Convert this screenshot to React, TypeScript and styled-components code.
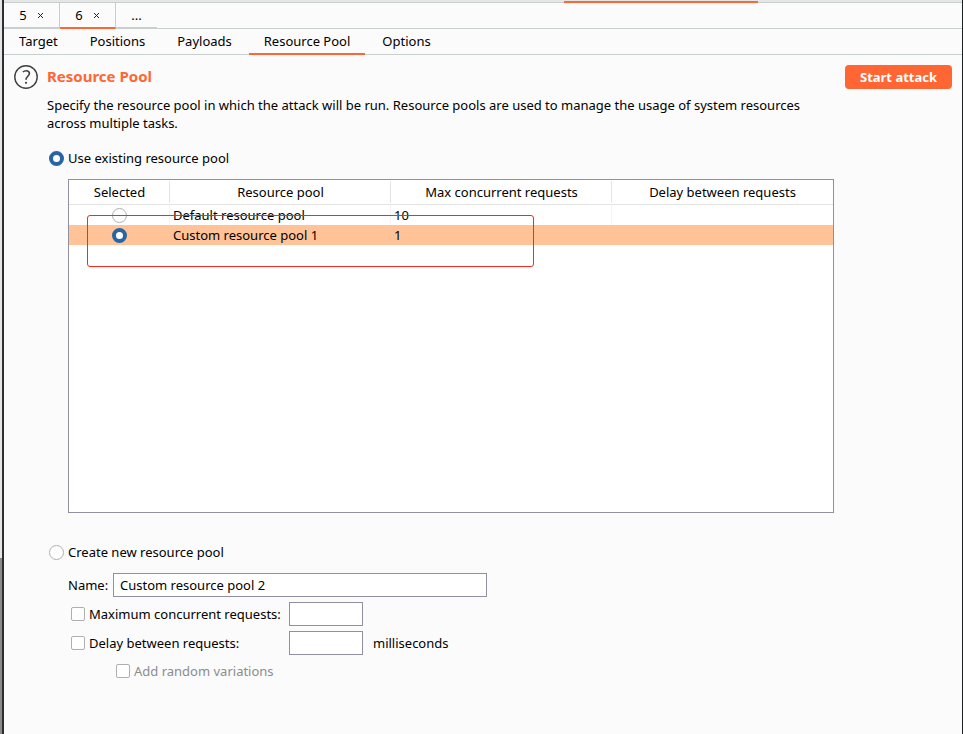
import React, { useState } from "react";
import styled, { createGlobalStyle } from "styled-components";

const accent = "#ff6633";
const line = "#c8d0cf";
const fieldBorder = "#9290a0";

const GlobalStyle = createGlobalStyle`
  *, *::before, *::after { box-sizing: border-box; }
  body {
    margin: 0;
    background: #fbfbfb;
    color: #000;
    font-family: "Noto Sans", "Open Sans", sans-serif;
    font-size: 13px;
    line-height: 18px;
  }
  button, input { font: inherit; color: inherit; }
`;

const Screen = styled.div`
  display: flex;
  min-height: 100vh;
`;

const DesktopEdge = styled.div`
  width: 2px;
  background: linear-gradient(#e6e6e6 0 76%, #8a8a88 76% 100%);
`;

const Window = styled.main`
  flex: 1;
  min-width: 0;
  border-left: 2px solid #2b2f31;
  border-right: 1px solid #1c2024;
`;

const TopStrip = styled.div`
  display: flex;
  height: 3px;
  padding-left: 560px;
  background: #e6e6e6;
  border-bottom: 1px solid ${line};
`;

const TopMarker = styled.div`
  width: 194px;
  height: 2px;
  margin-top: 1px;
  background: ${accent};
`;

const AttackTabs = styled.nav`
  display: flex;
  height: 26px;
  border-bottom: 1px solid ${line};
`;

const AttackTab = styled.div<{ $active?: boolean }>`
  display: flex;
  align-items: center;
  justify-content: center;
  gap: 10px;
  width: 56px;
  height: 26px;
  border-right: 1px solid ${line};
  border-bottom: 2px solid ${(p) => (p.$active ? accent : line)};
`;

const PlainButton = styled.button`
  display: flex;
  align-items: center;
  padding: 0;
  border: 0;
  background: none;
`;

const MoreTab = styled(PlainButton)`
  justify-content: center;
  width: 41px;
  height: 25px;
  border-bottom: 1px solid ${line};
`;

const SectionTabs = styled.nav`
  display: flex;
  gap: 2px;
  height: 26px;
  border-bottom: 1px solid ${line};
`;

const SectionTab = styled.button<{ $active?: boolean }>`
  height: 26px;
  padding: 0 15px;
  border: 0;
  border-bottom: 2px solid ${(p) => (p.$active ? accent : "transparent")};
  background: none;
  white-space: nowrap;
`;

const Content = styled.div`
  display: flex;
  align-items: flex-start;
  gap: 11px;
  padding: 10px;
`;

const Main = styled.section`
  flex: 1;
  min-width: 0;
`;

const TitleRow = styled.header`
  display: flex;
  align-items: center;
  gap: 9px;
  height: 24px;
`;

const HelpButton = styled(PlainButton)`
  width: 24px;
  height: 24px;
`;

const Title = styled.h1`
  margin: 0;
  padding-bottom: 2px;
  color: ${accent};
  font-size: 15px;
  line-height: 20px;
`;

const Body = styled.div`
  padding-left: 33px;
`;

const Description = styled.p`
  margin: 7px 0 17px;
`;

const StartButton = styled.button`
  width: 107px;
  height: 24px;
  padding: 0;
  border: 0;
  border-radius: 4px;
  background: ${accent};
  color: #fff;
  font-weight: 700;
`;

const Option = styled.label<{ $disabled?: boolean }>`
  display: flex;
  align-items: center;
  gap: 4px;
  height: 18px;
  color: ${(p) => (p.$disabled ? "#8c8c8c" : "inherit")};
  white-space: nowrap;
`;

const PoolOption = styled(Option)`
  margin-left: 2px;
`;

const Radio = styled.input.attrs({ type: "radio" })`
  appearance: none;
  flex: none;
  width: 15px;
  height: 15px;
  margin: 0;
  border: 1px solid #b0b0b0;
  border-radius: 50%;
  background: #fff;
  &:checked { border: 4px solid #2765a3; }
`;

const Checkbox = styled.input.attrs({ type: "checkbox" })`
  appearance: none;
  flex: none;
  width: 14px;
  height: 14px;
  margin: 0;
  border: 1px solid #afafaf;
  border-radius: 2px;
  background: #fff;
  &:checked { background: #2765a3; }
`;

const TablePanel = styled.div`
  position: relative;
  min-height: 334px;
  margin: 12px 0 30px 21px;
  border: 1px solid ${fieldBorder};
  background: #fff;
`;

const PoolTable = styled.table`
  width: 100%;
  border-spacing: 0;
  table-layout: fixed;
`;

const HeadCell = styled.th`
  height: 25px;
  padding: 0;
  border-bottom: 1px solid #e4e4e4;
  background: linear-gradient(#e4e4e4, #e4e4e4) right 1px / 1px 22px no-repeat;
  font-weight: 400;
  &:first-child { width: 101px; }
  &:last-child { background: none; }
`;

const PoolRow = styled.tr<{ $selected: boolean }>`
  background: ${(p) => (p.$selected ? "#ffc397" : "#fff")};
`;

const PoolCell = styled.td<{ $selected: boolean }>`
  height: 20px;
  padding: 0 3px;
  border-right: 1px solid ${(p) => (p.$selected ? "transparent" : "#f4f4f4")};
  &:last-child { border-right: 0; }
  ${Radio} { display: block; margin: 0 auto; }
`;

const Highlight = styled.div`
  position: absolute;
  top: 35px;
  left: 18px;
  width: 447px;
  height: 52px;
  border: 1px solid #f92a1c;
  border-radius: 3px;
  pointer-events: none;
`;

const Form = styled.div`
  display: flex;
  flex-direction: column;
  gap: 5px;
  margin: 12px 0 0 21px;
`;

const FormRow = styled.div`
  display: flex;
  align-items: center;
  height: 24px;
`;

const NameLabel = styled.label`
  width: 45px;
`;

const CheckSlot = styled.div`
  width: 221px;
  padding-left: 3px;
`;

const TextField = styled.input<{ $wide?: boolean }>`
  width: ${(p) => (p.$wide ? 374 : 74)}px;
  height: 24px;
  padding: 0 6px;
  border: 1px solid ${fieldBorder};
  border-radius: 0;
  background: #fff;
`;

const Unit = styled.span`
  margin-left: 10px;
`;

const Indented = styled.div`
  padding: 2px 0 0 48px;
`;

const CloseIcon = () => (
  <svg width="7" height="7" viewBox="0 0 7 7" aria-hidden="true">
    <path d="M1 1l5 5M6 1L1 6" stroke="#222" strokeWidth="1" />
  </svg>
);

const HelpIcon = () => (
  <svg width="24" height="24" viewBox="0 0 24 24" fill="none" aria-hidden="true">
    <circle cx="12" cy="12" r="11.2" stroke="#404040" strokeWidth="1.4" />
    <path
      d="M8.9 7C9.7 6.2 10.8 5.7 12.1 5.7C14.1 5.7 15.4 6.8 15.4 8.5C15.4 11.1 12 11.5 12 14.7"
      stroke="#404040"
      strokeWidth="1.6"
    />
    <circle cx="12" cy="17.8" r="1.1" fill="#404040" />
  </svg>
);

const sections = ["Target", "Positions", "Payloads", "Resource Pool", "Options"];
const headings = ["Selected", "Resource pool", "Max concurrent requests", "Delay between requests"];
const pools = [
  { name: "Default resource pool", max: "10", delay: "" },
  { name: "Custom resource pool 1", max: "1", delay: "" },
];

export default function App() {
  const [section, setSection] = useState("Resource Pool");
  const [mode, setMode] = useState("existing");
  const [pool, setPool] = useState("Custom resource pool 1");

  return (
    <Screen>
      <GlobalStyle />
      <DesktopEdge />
      <Window>
        <TopStrip>
          <TopMarker />
        </TopStrip>
        <AttackTabs aria-label="Attacks">
          {["5", "6"].map((n) => (
            <AttackTab key={n} $active={n === "6"}>
              <PlainButton>{n}</PlainButton>
              <PlainButton aria-label={`Close tab ${n}`}>
                <CloseIcon />
              </PlainButton>
            </AttackTab>
          ))}
          <MoreTab>...</MoreTab>
        </AttackTabs>
        <SectionTabs aria-label="Sections">
          {sections.map((s) => (
            <SectionTab key={s} $active={s === section} onClick={() => setSection(s)}>
              {s}
            </SectionTab>
          ))}
        </SectionTabs>
        <Content>
          <Main>
            <TitleRow>
              <HelpButton aria-label="Help">
                <HelpIcon />
              </HelpButton>
              <Title>Resource Pool</Title>
            </TitleRow>
            <Body>
              <Description>
                Specify the resource pool in which the attack will be run. Resource pools are used to
                manage the usage of system resources across multiple tasks.
              </Description>
              <PoolOption>
                <Radio name="mode" checked={mode === "existing"} onChange={() => setMode("existing")} />
                Use existing resource pool
              </PoolOption>
              <TablePanel>
                <PoolTable>
                  <thead>
                    <tr>
                      {headings.map((h) => (
                        <HeadCell key={h} scope="col">
                          {h}
                        </HeadCell>
                      ))}
                    </tr>
                  </thead>
                  <tbody>
                    {pools.map((p) => {
                      const selected = p.name === pool;
                      return (
                        <PoolRow key={p.name} $selected={selected}>
                          <PoolCell $selected={selected}>
                            <Radio
                              name="pool"
                              aria-label={p.name}
                              checked={selected}
                              onChange={() => setPool(p.name)}
                            />
                          </PoolCell>
                          <PoolCell $selected={selected}>{p.name}</PoolCell>
                          <PoolCell $selected={selected}>{p.max}</PoolCell>
                          <PoolCell $selected={selected}>{p.delay}</PoolCell>
                        </PoolRow>
                      );
                    })}
                  </tbody>
                </PoolTable>
                <Highlight />
              </TablePanel>
              <PoolOption>
                <Radio name="mode" checked={mode === "new"} onChange={() => setMode("new")} />
                Create new resource pool
              </PoolOption>
              <Form>
                <FormRow>
                  <NameLabel htmlFor="pool-name">Name:</NameLabel>
                  <TextField id="pool-name" $wide defaultValue="Custom resource pool 2" />
                </FormRow>
                <FormRow>
                  <CheckSlot>
                    <Option>
                      <Checkbox />
                      Maximum concurrent requests:
                    </Option>
                  </CheckSlot>
                  <TextField aria-label="Maximum concurrent requests" />
                </FormRow>
                <FormRow>
                  <CheckSlot>
                    <Option>
                      <Checkbox />
                      Delay between requests:
                    </Option>
                  </CheckSlot>
                  <TextField aria-label="Delay between requests in milliseconds" />
                  <Unit>milliseconds</Unit>
                </FormRow>
                <Indented>
                  <Option $disabled>
                    <Checkbox disabled />
                    Add random variations
                  </Option>
                </Indented>
              </Form>
            </Body>
          </Main>
          <StartButton>Start attack</StartButton>
        </Content>
      </Window>
    </Screen>
  );
}
